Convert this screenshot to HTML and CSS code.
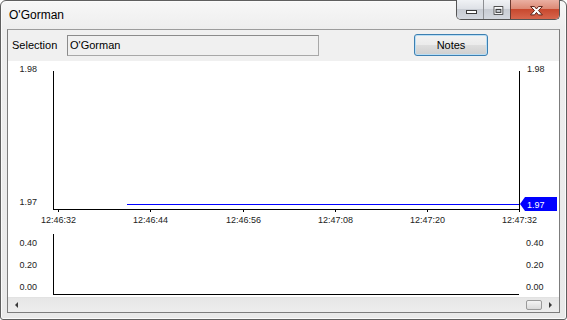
FILE: index.html
```html
<!DOCTYPE html>
<html>
<head>
<meta charset="utf-8">
<link rel="stylesheet" href="styles.css">
</head>
<body>
<div class="window">
  <div class="titlebar">
    <span class="title">O'Gorman</span>
    <div class="caption">
      <div class="cbtn min">
        <svg width="26" height="19" viewBox="0 0 26 19"><rect x="9.5" y="10.5" width="10" height="3" fill="#fff" stroke="#3a3a3a"/></svg>
      </div>
      <div class="cbtn max">
        <svg width="27" height="19" viewBox="0 0 27 19"><rect x="10.5" y="6.5" width="9" height="8" fill="none" stroke="#3a3a3a"/><rect x="11.5" y="7.5" width="7" height="6" fill="none" stroke="#fff"/><rect x="12.5" y="9.5" width="5" height="3" fill="none" stroke="#3a3a3a"/></svg>
      </div>
      <div class="cbtn close">
        <svg width="49" height="19" viewBox="0 0 49 19"><path d="M20 6.5h4l2 2.5 2-2.5h4l-4 4 4 4.5h-4l-2-2.5-2 2.5h-4l4-4.5z" fill="#fff" stroke="#5a1e12" stroke-width="1" stroke-linejoin="round"/></svg>
      </div>
    </div>
  </div>
  <div class="client">
    <div class="toolbar">
      <span class="sel-label">Selection</span>
      <div class="sel-box">O'Gorman</div>
      <button class="notes">Notes</button>
    </div>
    <div class="chart">
      <svg width="551" height="236" viewBox="0 0 551 236">
        <g stroke="#000" fill="none" shape-rendering="crispEdges">
          <path d="M45.5 10V148.5H511.5M511.5 10V151"/>
          <path d="M50.5 148.5V151M142.5 148.5V151M235.5 148.5V151M327.5 148.5V151M419.5 148.5V151"/>
          <path d="M45.5 173V233.5H511"/>
        </g>
        <path d="M119 143.5H511" stroke="#0000ff" fill="none" shape-rendering="crispEdges"/>
        <polygon points="512,143 517,136 549,136 549,150 517,150" fill="#0000ff"/>
        <g class="lbl">
          <text x="29" y="11" text-anchor="end">1.98</text>
          <text x="29" y="144" text-anchor="end">1.97</text>
          <text x="519" y="11">1.98</text>
          <text x="50.5" y="162" text-anchor="middle">12:46:32</text>
          <text x="142.5" y="162" text-anchor="middle">12:46:44</text>
          <text x="235.5" y="162" text-anchor="middle">12:46:56</text>
          <text x="327.5" y="162" text-anchor="middle">12:47:08</text>
          <text x="419.5" y="162" text-anchor="middle">12:47:20</text>
          <text x="511.5" y="162" text-anchor="middle">12:47:32</text>
          <text x="29" y="185" text-anchor="end">0.40</text>
          <text x="29" y="207" text-anchor="end">0.20</text>
          <text x="29" y="229" text-anchor="end">0.00</text>
          <text x="518" y="185">0.40</text>
          <text x="518" y="207">0.20</text>
          <text x="518" y="229">0.00</text>
        </g>
        <text class="tag" x="519" y="147">1.97</text>
      </svg>
    </div>
    <div class="hscroll">
      <div class="sbtn"><span class="arr-left"></span></div>
      <div class="track"><div class="thumb"></div></div>
      <div class="sbtn"><span class="arr-right"></span></div>
    </div>
  </div>
</div>
</body>
</html>
```

FILE: styles.css
```css
html, body {
  margin: 0;
  padding: 0;
  background: #ffffff;
}

body {
  font-family: "Liberation Sans", Arial, sans-serif;
}

.window {
  width: 567px;
  height: 320px;
  box-sizing: border-box;
  border: 1px solid #5f5f5f;
  border-radius: 6px 6px 3px 3px;
  background: linear-gradient(#f7f7f7 0px, #eeeeee 28px, #e9e9e9 100%);
  box-shadow: inset 0 0 0 1px #fbfbfb;
  display: flex;
  flex-direction: column;
}

.titlebar {
  height: 28px;
  display: flex;
  align-items: flex-start;
  flex: none;
}

.title {
  font-size: 12px;
  line-height: 28px;
  padding-left: 8px;
  color: #000;
}

.caption {
  display: flex;
  margin: -1px 6px 0 auto;
  height: 20px;
  box-sizing: border-box;
  border: 1px solid #555;
  border-top: none;
  border-radius: 0 0 5px 5px;
  overflow: hidden;
}

.cbtn {
  height: 19px;
  display: flex;
}

.cbtn.min {
  width: 26px;
  background: linear-gradient(#f0f2f5 0%, #dfe2e7 45%, #c8ccd3 50%, #d4d8df 100%);
  border-right: 1px solid #8d8f93;
}

.cbtn.max {
  width: 26px;
  background: linear-gradient(#f0f2f5 0%, #dfe2e7 45%, #c8ccd3 50%, #d4d8df 100%);
  border-right: 1px solid #6d3a30;
}

.cbtn.close {
  width: 48px;
  background: linear-gradient(#eab0a2 0%, #dd8a76 45%, #c8492f 50%, #d7664d 100%);
}

.client {
  flex: 1;
  margin: 0 6px 6px 6px;
  border: 1px solid #7c7c7c;
  border-top-color: #9c9c9c;
  display: flex;
  flex-direction: column;
  background: #f0f0f0;
}

.toolbar {
  height: 31px;
  flex: none;
  display: flex;
  align-items: flex-start;
  box-sizing: border-box;
  padding: 5px 0 0 4px;
  font-size: 11px;
  background: #f0f0f0;
}

.sel-label {
  width: 55px;
  line-height: 21px;
  color: #000;
}

.sel-box {
  width: 252px;
  height: 21px;
  box-sizing: border-box;
  border: 1px solid #8b8b8b;
  border-right-color: #a8a8a8;
  border-bottom-color: #a8a8a8;
  background: #f0f0f0;
  line-height: 19px;
  padding-left: 2px;
  color: #000;
}

.notes {
  margin: -1px 0 0 95px;
  width: 74px;
  height: 22px;
  box-sizing: border-box;
  border: 1px solid #3c7fb1;
  border-radius: 3px;
  background: linear-gradient(#f3f3f3 0%, #ebebeb 48%, #dddddd 52%, #cfcfcf 100%);
  box-shadow: inset 0 0 0 1px #b9def5;
  font-family: "Liberation Sans", Arial, sans-serif;
  font-size: 11px;
  color: #000;
  padding: 0;
}

.chart {
  height: 236px;
  flex: none;
  background: #ffffff;
}

.chart svg {
  display: block;
}

.lbl text {
  font-family: "Liberation Sans", Arial, sans-serif;
  font-size: 9px;
  fill: #222;
}

.tag {
  font-family: "Liberation Sans", Arial, sans-serif;
  font-size: 9px;
  fill: #ffffff;
}

.hscroll {
  flex: 1;
  display: flex;
  background: linear-gradient(#e6e6e6, #ededed);
  border-top: 1px solid #e2e2e2;
}

.sbtn {
  width: 17px;
  display: flex;
  align-items: center;
  justify-content: center;
}

.arr-left {
  width: 0;
  height: 0;
  border-top: 3px solid transparent;
  border-bottom: 3px solid transparent;
  border-right: 3px solid #3a3a3a;
}

.arr-right {
  width: 0;
  height: 0;
  border-top: 3px solid transparent;
  border-bottom: 3px solid transparent;
  border-left: 3px solid #3a3a3a;
}

.track {
  flex: 1;
  display: flex;
  justify-content: flex-end;
  align-items: center;
}

.thumb {
  width: 16px;
  height: 10px;
  box-sizing: border-box;
  border: 1px solid #9a9a9a;
  border-radius: 2px;
  background: linear-gradient(#f4f4f4, #dadada);
}
```
